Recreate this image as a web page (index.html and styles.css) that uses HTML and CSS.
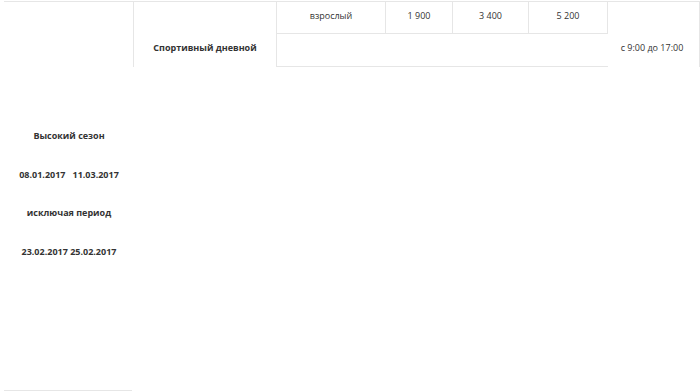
FILE: index.html
```html
<!DOCTYPE html>
<html lang="ru">
<head>
<meta charset="utf-8">
<link rel="stylesheet" href="styles.css">
</head>
<body>
<div class="page">
  <div class="top">
    <div class="cell c-left"></div>
    <div class="cell c-name"><span class="bold">Спортивный дневной</span></div>
    <div class="c-prices">
      <div class="prow">
        <div class="pc w-type">взрослый</div>
        <div class="pc w-a">1 900</div>
        <div class="pc w-b">3 400</div>
        <div class="pc w-c">5 200</div>
      </div>
      <div class="prow2"></div>
    </div>
    <div class="cell c-time">с 9:00 до 17:00</div>
  </div>
  <div class="left-body">
    <p class="bold">Высокий сезон</p>
    <p class="bold">08.01.2017&nbsp;&nbsp; 11.03.2017</p>
    <p class="bold">исключая период</p>
    <p class="bold">23.02.2017 25.02.2017</p>
  </div>
</div>
</body>
</html>
```
FILE: styles.css
```css
html, body {
  margin: 0;
  padding: 0;
  background: #fff;
}
body {
  font-family: "Open Sans", "Liberation Sans", sans-serif;
  font-size: 9px;
  color: #333;
  width: 700px;
  height: 392px;
  overflow: hidden;
}
.page {
  padding-top: 1px;
}
.bold {
  font-weight: 700;
}
.top {
  display: flex;
  height: 66px;
  margin-left: 4px;
}
.cell {
  border-top: 1px solid #e6e6e6;
  border-right: 1px solid #e6e6e6;
  box-sizing: border-box;
  height: 66px;
}
.c-left {
  width: 130px;
}
.c-name {
  width: 143px;
  display: flex;
  justify-content: center;
  align-items: flex-start;
  padding-top: 39px;
}
.c-prices {
  width: 331px;
  display: flex;
  flex-direction: column;
  border-top: 1px solid #e6e6e6;
  box-sizing: border-box;
  height: 66px;
}
.prow {
  display: flex;
  height: 32px;
  border-bottom: 1px solid #e6e6e6;
  box-sizing: border-box;
}
.pc {
  border-right: 1px solid #e6e6e6;
  box-sizing: border-box;
  text-align: center;
  padding-top: 7px;
}
.w-type { width: 109px; }
.w-a { width: 67px; }
.w-b { width: 76px; }
.w-c { width: 79px; }
.prow2 {
  height: 33px;
  border-bottom: 1px solid #e6e6e6;
  box-sizing: border-box;
}
.c-time {
  width: 92px;
  text-align: center;
  padding-top: 39px;
  padding-right: 3px;
}
.left-body {
  margin-left: 4px;
  width: 128px;
  height: 324px;
  box-sizing: border-box;
  border-bottom: 1px solid #e6e6e6;
  padding-top: 62px;
  padding-left: 2px;
  text-align: center;
}
.left-body p {
  margin: 0 0 24.5px;
  line-height: 14px;
}
```
